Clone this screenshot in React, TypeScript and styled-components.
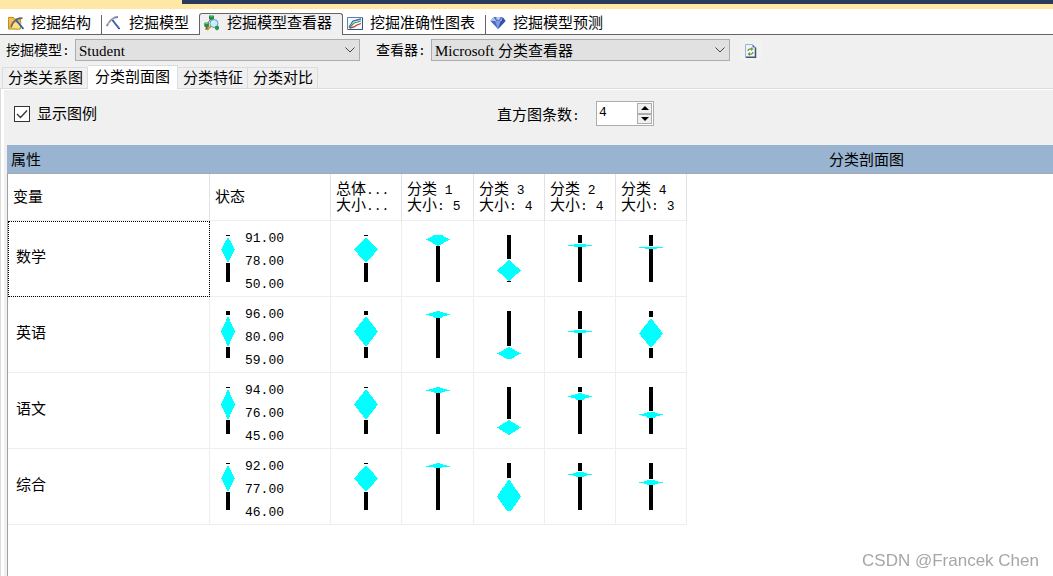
import React, { useState } from "react";
import styled, { createGlobalStyle, css } from "styled-components";

const GlobalStyle = createGlobalStyle`
  *, *::before, *::after { box-sizing: border-box; }
  body {
    margin: 0;
    background: #fff;
    color: #000;
    font-family: "Liberation Serif", "Noto Sans CJK SC", sans-serif;
    font-size: 15px;
    line-height: 16px;
  }
  button, input, select { font: inherit; color: inherit; margin: 0; }
`;

const Page = styled.div`
  display: flex;
  flex-direction: column;
  min-height: 100vh;
  background: #f0f0f0;
`;

const WindowEdge = styled.div`
  height: 9px;
  flex: none;
  padding-left: 182px;
  background: #ffe8a6;
`;

const WindowEdgeDark = styled.div`
  height: 4px;
  background: #293a5c;
`;

const MainTabs = styled.nav`
  display: flex;
  align-items: flex-end;
  flex: none;
  height: 26px;
  background: #fff;
  box-shadow: inset 0 -1px #646464;
`;

const MainTab = styled.button<{ $active?: boolean; $divider?: boolean; $first?: boolean }>`
  display: flex;
  align-items: center;
  gap: 7px;
  height: 20px;
  padding: 0 10px 4px 4px;
  border: 0;
  background: none;
  white-space: nowrap;
  ${(p) => p.$first && css`padding-left: 8px;`}
  ${(p) => !p.$active && css`border-bottom: 1px solid #646464; padding-bottom: 3px;`}
  ${(p) => p.$divider && css`border-right: 1px solid #646464;`}
  ${(p) =>
    p.$active &&
    css`
      height: 22px;
      padding: 0 10px 4px 4px;
      border: 1px solid #646464;
      border-bottom: 0;
      border-radius: 3px 3px 0 0;
      background: #f0f0f0;
    `}
`;

const Toolbar = styled.div`
  display: flex;
  align-items: center;
  flex: none;
  height: 30px;
  padding-left: 6px;
  font-size: 14px;
`;

const ToolLabel = styled.label<{ $spaced?: boolean }>`
  width: ${(p) => (p.$spaced ? 55 : 69)}px;
  margin-left: ${(p) => (p.$spaced ? 16 : 0)}px;
  padding-top: 2px;
  white-space: nowrap;
`;

const SelectBox = styled.div<{ $width: number }>`
  display: grid;
  align-items: center;
  width: ${(p) => p.$width}px;
  height: 22px;
  & > * { grid-area: 1 / 1; }
  & > svg { justify-self: end; margin-right: 4px; pointer-events: none; }
`;

const Select = styled.select`
  appearance: none;
  width: 100%;
  height: 22px;
  padding: 1px 20px 0 3px;
  border: 1px solid #adadad;
  border-radius: 0;
  background: #e1e1e1;
  font-size: 15px;
`;

const IconButton = styled.button`
  display: flex;
  align-items: center;
  justify-content: center;
  width: 22px;
  height: 22px;
  margin-left: 10px;
  padding: 2px 0 0;
  border: 0;
  background: #f2f2f2;
`;

const ViewTabs = styled.nav`
  display: flex;
  align-items: flex-end;
  flex: none;
  height: 24px;
  padding-left: 2px;
  box-shadow: inset 0 -1px #dcdcdc;
`;

const ViewTab = styled.button<{ $active?: boolean }>`
  height: 22px;
  padding: 0 4px 0 5px;
  border: 1px solid #dcdcdc;
  border-left: 0;
  background: #f0f0f0;
  white-space: nowrap;
  &:first-child { border-left: 1px solid #dcdcdc; }
  ${(p) =>
    p.$active &&
    css`
      height: 24px;
      padding: 0 7px 2px;
      border-bottom: 0;
      background: #fff;
    `}
`;

const ViewPanel = styled.main`
  display: flex;
  flex-direction: column;
  flex: 1;
  border-left: 1px solid #dcdcdc;
  box-shadow: inset 3px 1px #fff;
  padding-left: 6px;
`;

const Options = styled.div`
  display: flex;
  align-items: flex-start;
  flex: none;
  height: 56px;
  padding: 12px 0 0 7px;
`;

const CheckLabel = styled.label`
  display: flex;
  align-items: center;
  gap: 7px;
  width: 483px;
  margin-top: 5px;
`;

const CheckBox = styled.input`
  appearance: none;
  width: 16px;
  height: 16px;
  border: 1px solid #333;
  background: #fff;
`;

const CheckHolder = styled.span`
  display: grid;
  & > * { grid-area: 1 / 1; }
  & > svg { pointer-events: none; }
`;

const SpinLabel = styled.label`
  width: 99px;
  margin-top: 6px;
  white-space: nowrap;
`;

const Spinner = styled.div`
  display: flex;
  width: 58px;
  height: 25px;
  padding: 1px;
  border: 1px solid #adadad;
  background: #fff;
`;

const SpinInput = styled.input`
  appearance: textfield;
  flex: 1;
  min-width: 0;
  height: 18px;
  padding: 0 1px;
  border: 0;
  outline: 0;
  background: none;
  font-family: "Liberation Mono", monospace;
  font-size: 13px;
  &::-webkit-inner-spin-button { appearance: none; }
`;

const SpinButtons = styled.div`
  display: flex;
  flex-direction: column;
  width: 15px;
`;

const SpinButton = styled.button`
  display: flex;
  flex: 1;
  align-items: center;
  justify-content: center;
  padding: 0;
  border: 1px solid #adadad;
  background: #f0f0f0;
`;

const GridHeader = styled.div`
  display: grid;
  grid-template-columns: 673px 1fr;
  align-items: center;
  flex: none;
  height: 29px;
  padding-top: 1px;
  border-bottom: 1px solid #a5a9b0;
  background: #99b4d1;
  white-space: nowrap;
`;

const GridTitle = styled.h2<{ $center?: boolean }>`
  margin: 0;
  padding-left: ${(p) => (p.$center ? 0 : 4)}px;
  font-size: 15px;
  line-height: 16px;
  font-weight: 400;
  text-align: ${(p) => (p.$center ? "center" : "left")};
`;

const GridBody = styled.div`
  flex: 1;
  border-left: 1px solid #a0a0a0;
  background: #fff;
`;

const Table = styled.table`
  table-layout: fixed;
  width: 679px;
  border-collapse: separate;
  border-spacing: 0;
`;

const Col = styled.col<{ $width: number }>`
  width: ${(p) => p.$width}px;
`;

const HeadCell = styled.th`
  height: 47px;
  padding: 0 0 0 5px;
  border-right: 1px solid #e2e2e2;
  border-bottom: 1px solid #eee;
  font-weight: 400;
  text-align: left;
  white-space: nowrap;
`;

const Cell = styled.td`
  height: 76px;
  padding: 0;
  border-right: 1px solid #eee;
  border-bottom: 1px solid #eee;
  text-align: center;
`;

const NameCell = styled.th<{ $focused?: boolean }>`
  height: 76px;
  padding: 0 0 4px 8px;
  border-right: 1px solid #eee;
  border-bottom: 1px solid #eee;
  font-weight: 400;
  text-align: left;
  ${(p) => p.$focused && css`outline: 1px dotted #000; outline-offset: -1px;`}
`;

const Latin = styled.span`
  font-family: "Liberation Mono", monospace;
  font-size: 13px;
  line-height: 1;
  white-space: pre;
`;

const Scale = styled.div`
  display: flex;
  align-items: center;
  gap: 10px;
  padding-left: 11px;
`;

const ScaleValues = styled.div`
  display: flex;
  flex-direction: column;
  gap: 7px;
  padding-top: 6px;
  font-family: "Liberation Mono", monospace;
  font-size: 13px;
`;

const Plot = styled.svg`
  display: block;
  margin: 0 auto;
`;

const ScalePlot = styled.svg`
  display: block;
  flex: none;
`;

const Watermark = styled.div`
  position: fixed;
  right: 14px;
  bottom: 5px;
  color: #a6a6a6;
  font-family: "Liberation Sans", sans-serif;
  font-size: 17px;
  line-height: 20px;
`;

/* upper bar end, diamond top, centre, diamond bottom, lower bar start */
type Mark = [number, number, number, number, number];

const rows: { name: string; values: string[]; marks: Mark[] }[] = [
  {
    name: "数学",
    values: ["91.00", "78.00", "50.00"],
    marks: [
      [1, 2, 14, 28, 28],
      [0, -2, 4, 11, 11],
      [24, 25, 35, 46, 46],
      [8, 9, 10, 12, 12],
      [11, 12, 12, 14, 14],
    ],
  },
  {
    name: "英语",
    values: ["96.00", "80.00", "59.00"],
    marks: [
      [4, 5, 20, 36, 36],
      [0, 0, 3, 7, 7],
      [35, 36, 42, 49, 48],
      [18, 19, 20, 22, 22],
      [6, 7, 22, 37, 37],
    ],
  },
  {
    name: "语文",
    values: ["94.00", "76.00", "45.00"],
    marks: [
      [1, 2, 17, 33, 33],
      [0, 0, 3, 6, 6],
      [32, 33, 40, 48, 48],
      [5, 6, 9, 13, 13],
      [24, 25, 27, 31, 31],
    ],
  },
  {
    name: "综合",
    values: ["92.00", "77.00", "46.00"],
    marks: [
      [1, 2, 15, 29, 29],
      [0, 0, 3, 5, 5],
      [15, 16, 33, 51, 48],
      [8, 9, 11, 14, 14],
      [16, 17, 19, 22, 22],
    ],
  },
];

const clusters = [
  { title: "分类", id: "1", size: "5" },
  { title: "分类", id: "3", size: "4" },
  { title: "分类", id: "2", size: "4" },
  { title: "分类", id: "4", size: "3" },
];

function Diamond({ mark, width }: { mark: Mark; width: number }) {
  const [upper, top, mid, bottom, lower] = mark;
  const c = width / 2;
  const flat = bottom - top < 8;
  const bodyTop = Math.max(top, mid - 2);
  return (
    <g shapeRendering="crispEdges">
      {upper > 0 && <rect x={c - 2} y={0} width={4} height={upper} />}
      {lower < 47 && <rect x={c - 2} y={lower} width={4} height={47 - lower} />}
      <polygon
        fill="#0ff"
        points={`0,${mid + 0.5} ${c},${top} ${width},${mid + 0.5} ${c},${bottom}`}
      />
      <rect x={0} y={mid} width={width} height={1} fill="#0ff" />
      {flat && (
        <rect
          x={bottom - top < 4 ? c - 6 : c - 4}
          y={bodyTop}
          width={bottom - top < 4 ? 12 : 8}
          height={bottom - bodyTop}
          fill="#0ff"
        />
      )}
    </g>
  );
}

const Chevron = () => (
  <svg width="12" height="8" viewBox="0 0 12 8" fill="none" stroke="#444">
    <path d="M1.5 1.5 6 6l4.500-4.500" />
  </svg>
);

const StructureIcon = () => (
  <svg width="16" height="16" viewBox="0 0 16 16">
    <path d="M.5 4.500V2.500h5l1 1.500h6v10H.5z" fill="#f2c14d" stroke="#c08a20" />
    <path d="M1 13.500 4 7h9l-1 7z" fill="#ffdf82" stroke="#c99328" strokeWidth=".7" />
    <path d="M3 12.500C4 9 6 6 9 4.300c2-1 4-1.300 5.500-1" stroke="#5c6678" strokeWidth="1.600" fill="none" />
    <path d="M8 5 15.500 14" stroke="#2f5aa8" strokeWidth="1.800" />
  </svg>
);

const ModelIcon = () => (
  <svg width="16" height="16" viewBox="0 0 16 16">
    <path d="M6 4.500 13.500 14" stroke="#243f8f" strokeWidth="1.800" fill="none" />
    <path d="M6 4.200 13 13" stroke="#6f8fd0" strokeWidth=".7" fill="none" />
    <path d="M.7 11C2.200 8 4 5.800 6 4.300 8 2.700 10 2 12 2" stroke="#7c8799" strokeWidth="1.800" fill="none" />
    <path d="M2 9C4 6 6 4 9 3" stroke="#c5d0e2" strokeWidth=".7" fill="none" />
  </svg>
);

const ViewerIcon = () => (
  <svg width="16" height="16" viewBox="0 0 16 16">
    <path d="M7 4 3 9M8 4l3 5" stroke="#526273" />
    <path d="M5 .8 7 0l3 .8v3.400L7.500 5.500 5 4.200z" fill="#268c43" />
    <path d="m5 .8 2.500 1L10 .8 7.500 0z" fill="#7bd596" />
    <path d="M.3 8 2.700 7 5 8v3.500L2.700 13 .3 11.500z" fill="#268c43" />
    <path d="m.3 8 2.400 1L5 8 2.700 7z" fill="#7bd596" />
    <path d="m7 11-4 4" stroke="#d8962c" strokeWidth="2" />
    <path d="m3.500 12.500-2 2" stroke="#8f4b22" strokeWidth="1.500" />
    <circle cx="10" cy="8.500" r="4" fill="#c8ecfb" stroke="#5f9fc3" />
    <path d="M8 8c.3-1 1-1.700 2-1.700" stroke="#fff" fill="none" />
    <path d="m11 11.500 2-1 2 1V14l-2 1.500-2-1.500z" fill="#2b9648" />
  </svg>
);

const AccuracyIcon = () => (
  <svg width="16" height="16" viewBox="0 0 16 16">
    <path d="M.5 2.500h15v12H.5z" fill="#f5faff" stroke="#5d7fa8" />
    <path d="M2 12 6 6l8-2" stroke="#3b69bd" strokeWidth="1.300" fill="none" />
    <path d="m2 13 5-5 7-2" stroke="#3c9b4b" strokeWidth="1.300" fill="none" />
    <path d="m3 13 4-1 3-2 4-1.500" stroke="#c9343c" strokeWidth="1.300" fill="none" />
    <path d="M1 14.500h14.500V3" stroke="#31547f" fill="none" />
  </svg>
);

const PredictionIcon = () => (
  <svg width="16" height="16" viewBox="0 0 16 16">
    <path d="M3.500 2h9L15.500 6 8 14 .5 6z" fill="#4a68bd" />
    <path d="m.5 6 3-4L5 6zM6 2h5L8 6z" fill="#a8bdf0" />
    <path d="m5 6 3 8 3-8z" fill="#7c9be3" />
    <path d="m11 6 1.500-4 3 4L8 14z" fill="#3450a5" />
    <path d="m3.500 2 1.500 4 3-4 3 4 1.500-4" stroke="#dce6ff" strokeWidth=".6" fill="none" />
  </svg>
);

const RefreshIcon = () => (
  <svg width="12" height="14" viewBox="0 0 12 14">
    <path d="M.5.5h7l3 3v10H.5z" fill="#eef3ff" stroke="#9fb2d6" />
    <path d="M10.500 3.500v9.800H1" stroke="#3e5574" strokeWidth="1.500" fill="none" />
    <path d="M7.500.5v3h3z" fill="#587199" />
    <path d="M3 7c0-2 2-2.500 4-2M8 8c0 2-2 2.500-4 2" stroke="#6b9d27" strokeWidth="1.300" fill="none" />
    <path d="M6 3.200 8.500 5 6 7zM5 8 2.500 10 5 12z" fill="#6b9d27" />
  </svg>
);

const mainTabs = [
  { label: "挖掘结构", Icon: StructureIcon, divider: true },
  { label: "挖掘模型", Icon: ModelIcon },
  { label: "挖掘模型查看器", Icon: ViewerIcon, active: true },
  { label: "挖掘准确性图表", Icon: AccuracyIcon, divider: true },
  { label: "挖掘模型预测", Icon: PredictionIcon },
];

const viewTabs = ["分类关系图", "分类剖面图", "分类特征", "分类对比"];

export default function App() {
  const [legend, setLegend] = useState(true);
  const [bars, setBars] = useState(4);

  return (
    <Page>
      <GlobalStyle />
      <WindowEdge><WindowEdgeDark /></WindowEdge>
      <MainTabs>
        {mainTabs.map(({ label, Icon, active, divider }, i) => (
          <MainTab key={label} type="button" $active={active} $divider={divider} $first={i === 0}>
            <Icon />
            {label}
          </MainTab>
        ))}
      </MainTabs>
      <Toolbar>
        <ToolLabel htmlFor="model">挖掘模型<Latin>:</Latin></ToolLabel>
        <SelectBox $width={285}>
          <Select id="model"><option>Student</option></Select>
          <Chevron />
        </SelectBox>
        <ToolLabel htmlFor="viewer" $spaced>查看器<Latin>:</Latin></ToolLabel>
        <SelectBox $width={299}>
          <Select id="viewer"><option>Microsoft 分类查看器</option></Select>
          <Chevron />
        </SelectBox>
        <IconButton type="button" aria-label="刷新"><RefreshIcon /></IconButton>
      </Toolbar>
      <ViewTabs>
        {viewTabs.map((label, i) => (
          <ViewTab key={label} type="button" $active={i === 1}>{label}</ViewTab>
        ))}
      </ViewTabs>
      <ViewPanel>
        <Options>
          <CheckLabel>
            <CheckHolder>
              <CheckBox type="checkbox" checked={legend} onChange={(e) => setLegend(e.target.checked)} />
              {legend && (
                <svg width="16" height="16" viewBox="0 0 16 16" fill="none" stroke="#333" strokeWidth="1.300">
                  <path d="m3 8 3.500 3.500L13 4.500" />
                </svg>
              )}
            </CheckHolder>
            显示图例
          </CheckLabel>
          <SpinLabel htmlFor="bars">直方图条数<Latin>:</Latin></SpinLabel>
          <Spinner>
            <SpinInput id="bars" type="number" value={bars} onChange={(e) => setBars(Number(e.target.value))} />
            <SpinButtons>
              <SpinButton type="button" aria-label="增加" onClick={() => setBars(bars + 1)}>
                <svg width="8" height="4" viewBox="0 0 8 4"><path d="M0 4 4 0l4 4z" /></svg>
              </SpinButton>
              <SpinButton type="button" aria-label="减少" onClick={() => setBars(bars - 1)}>
                <svg width="8" height="4" viewBox="0 0 8 4"><path d="m0 0 4 4 4-4z" /></svg>
              </SpinButton>
            </SpinButtons>
          </Spinner>
        </Options>
        <GridHeader>
          <GridTitle>属性</GridTitle>
          <GridTitle $center>分类剖面图</GridTitle>
        </GridHeader>
        <GridBody>
          <Table>
            <colgroup>
              <Col $width={202} />
              <Col $width={121} />
              <Col $width={71} />
              <Col $width={72} />
              <Col $width={71} />
              <Col $width={71} />
              <Col $width={71} />
            </colgroup>
            <thead>
              <tr>
                <HeadCell scope="col">变量</HeadCell>
                <HeadCell scope="col">状态</HeadCell>
                <HeadCell scope="col">
                  总体<Latin>...</Latin><br />大小<Latin>...</Latin>
                </HeadCell>
                {clusters.map((c) => (
                  <HeadCell key={c.id} scope="col">
                    {c.title}<Latin> {c.id}</Latin><br />大小<Latin>: {c.size}</Latin>
                  </HeadCell>
                ))}
              </tr>
            </thead>
            <tbody>
              {rows.map((row, r) => (
                <tr key={row.name}>
                  <NameCell scope="row" $focused={r === 0}>{row.name}</NameCell>
                  <Cell>
                    <Scale>
                      <ScalePlot width="14" height="48" viewBox="0 0 14 48">
                        <Diamond mark={row.marks[0]} width={14} />
                      </ScalePlot>
                      <ScaleValues>
                        {row.values.map((v) => <span key={v}>{v}</span>)}
                      </ScaleValues>
                    </Scale>
                  </Cell>
                  {row.marks.map((mark, i) => (
                    <Cell key={i}>
                      <Plot width="24" height="48" viewBox="0 0 24 48">
                        <Diamond mark={mark} width={24} />
                      </Plot>
                    </Cell>
                  ))}
                </tr>
              ))}
            </tbody>
          </Table>
        </GridBody>
      </ViewPanel>
      <Watermark>CSDN @Francek Chen</Watermark>
    </Page>
  );
}
